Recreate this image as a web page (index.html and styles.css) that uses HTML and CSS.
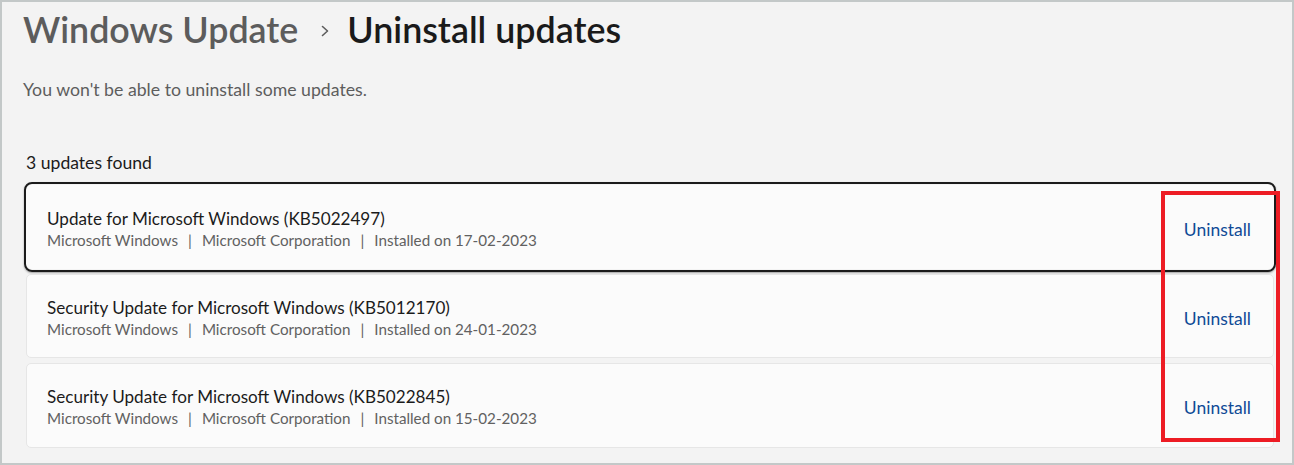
FILE: index.html
```html
<!DOCTYPE html>
<html lang="en">
<head>
<meta charset="utf-8">
<title>Uninstall updates</title>
<link rel="stylesheet" href="styles.css">
</head>
<body>
<div class="frame">
  <h1 class="breadcrumb">
    <span class="crumb-parent">Windows Update</span>
    <svg class="chev" width="12" height="14" viewBox="0 0 12 14"><path d="M3.5 2.5 L8.5 7 L3.5 11.5" fill="none" stroke="#5c5c5c" stroke-width="1.6" stroke-linecap="round" stroke-linejoin="round"/></svg>
    <span class="crumb-current">Uninstall updates</span>
  </h1>
  <p class="note">You won't be able to uninstall some updates.</p>
  <p class="count">3 updates found</p>
  <div class="list">
    <div class="card focused">
      <div class="info">
        <div class="name">Update for Microsoft Windows (KB5022497)</div>
        <div class="meta">Microsoft Windows<span class="sep">|</span>Microsoft Corporation<span class="sep">|</span>Installed on 17-02-2023</div>
      </div>
      <a class="action">Uninstall</a>
    </div>
    <div class="card">
      <div class="info">
        <div class="name">Security Update for Microsoft Windows (KB5012170)</div>
        <div class="meta">Microsoft Windows<span class="sep">|</span>Microsoft Corporation<span class="sep">|</span>Installed on 24-01-2023</div>
      </div>
      <a class="action">Uninstall</a>
    </div>
    <div class="card last">
      <div class="info">
        <div class="name">Security Update for Microsoft Windows (KB5022845)</div>
        <div class="meta">Microsoft Windows<span class="sep">|</span>Microsoft Corporation<span class="sep">|</span>Installed on 15-02-2023</div>
      </div>
      <a class="action">Uninstall</a>
    </div>
    <div class="highlight"></div>
  </div>
</div>
</body>
</html>
```
FILE: styles.css
```css
* { box-sizing: border-box; }
html, body { margin: 0; padding: 0; }
body {
  width: 1294px;
  height: 465px;
  overflow: hidden;
  background: #f3f3f3;
  font-family: Lato, "Liberation Sans", sans-serif;
}
.frame {
  width: 1294px;
  height: 465px;
  border: 2px solid #c3c8c8;
  padding: 7px 0 0 21px;
}
.breadcrumb {
  margin: 0;
  display: flex;
  align-items: center;
  font-size: 35.8px;
  font-weight: 600;
  line-height: 42px;
  height: 42px;
}
.crumb-parent { color: #5c5c5c; }
.chev { margin: 2px 16px 0 21px; }
.crumb-current { color: #1a1a1a; }
.note {
  margin: 28px 0 0 0;
  font-size: 17.7px;
  line-height: 22px;
  color: #5d5d5d;
}
.count {
  margin: 51px 0 0 3px;
  font-size: 17.6px;
  line-height: 22px;
  color: #1b1b1b;
}
.list {
  position: relative;
  margin: 11px 18px 0 3px;
  display: flex;
  flex-direction: column;
  gap: 5px;
}
.card {
  position: relative;
  height: 84px;
  background: #fbfbfb;
  border: 1px solid #e6e6e6;
  border-radius: 5px;
  display: flex;
  align-items: center;
  justify-content: space-between;
  padding: 4px 22px 0 20px;
}
.card.last { height: 85px; }
.card.focused { border-color: #fbfbfb; }
.card.focused::after {
  content: "";
  position: absolute;
  top: -4px; bottom: -4px; left: -3px; right: -3px;
  border: 2px solid #1b1b1b;
  border-radius: 8px;
  box-shadow: 0 1px 2px rgba(0,0,0,0.35);
}
.info { display: flex; flex-direction: column; }
.name {
  font-size: 17.1px;
  line-height: 22px;
  color: #1b1b1b;
}
.meta {
  font-size: 15.2px;
  line-height: 21px;
  color: #616161;
}
.sep { margin: 0 10px; }
.action {
  font-size: 17.5px;
  color: #0f4a96;
  cursor: pointer;
}
.highlight {
  position: absolute;
  top: 6px;
  left: 1135px;
  width: 119px;
  height: 251px;
  border: 4px solid #ed1c24;
}
```
